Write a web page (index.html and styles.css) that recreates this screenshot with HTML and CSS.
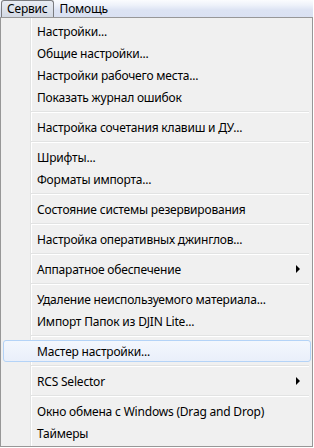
FILE: index.html
```html
<!DOCTYPE html>
<html lang="ru">
  <head>
    <meta charset="UTF-8" />
    <title>Сервис</title>
    <link rel="stylesheet" href="styles.css">
  </head>
  <body>
    <!-- Menu bar -->
    <div class="menubar">
      <span class="bar-item open">Сервис</span>
      <span class="bar-item">Помощь</span>
    </div>

    <!-- Dropdown -->
    <div class="menu">
      <div class="item">Настройки...</div>
      <div class="item">Общие настройки...</div>
      <div class="item">Настройки рабочего места...</div>
      <div class="item">Показать журнал ошибок</div>
      <div class="sep"></div>
      <div class="item">Настройка сочетания клавиш и ДУ...</div>
      <div class="sep"></div>
      <div class="item">Шрифты...</div>
      <div class="item">Форматы импорта...</div>
      <div class="sep"></div>
      <div class="item">Состояние системы резервирования</div>
      <div class="sep"></div>
      <div class="item">Настройка оперативных джинглов...</div>
      <div class="sep"></div>
      <div class="item sub">Аппаратное обеспечение</div>
      <div class="sep"></div>
      <div class="item">Удаление неиспользуемого материала...</div>
      <div class="item">Импорт Папок из DJIN Lite...</div>
      <div class="sep"></div>
      <div class="item hot">Мастер настройки...</div>
      <div class="sep"></div>
      <div class="item sub">RCS Selector</div>
      <div class="sep"></div>
      <div class="item">Окно обмена с Windows (Drag and Drop)</div>
      <div class="item">Таймеры</div>
    </div>
  </body>
</html>
```

FILE: styles.css
```css
body {
  margin: 0;
  width: 314px;
  height: 448px;
  background: #ffffff;
  font-family: "Noto Sans", "Open Sans", sans-serif;
  font-size: 12px;
  letter-spacing: -0.2px;
  color: #000;
  overflow: hidden;
}

/* Menu bar */
.menubar {
  height: 17px;
  width: 313px;
  display: flex;
  align-items: stretch;
  background: linear-gradient(#fbfcfe 0%, #eef2fa 30%, #dce3f3 60%, #dae1f2 100%);
}

.bar-item {
  display: flex;
  align-items: center;
  padding: 0 6px;
  line-height: 1;
}

.bar-item.open {
  margin-left: 1px;
  padding: 0 5px;
  border: 1px solid #7a7c80;
  border-bottom: none;
  border-radius: 3px 3px 0 0;
  background: linear-gradient(#e8ecf3, #d3d9e4);
}

/* Dropdown menu */
.menu {
  width: 311px;
  border: 1px solid #979797;
  background: linear-gradient(to right, #f0f0f0 29px, #e2e3e3 29px, #e2e3e3 30px, #ffffff 30px, #ffffff 31px, #f0f0f0 31px);
  padding: 2px 0;
  display: flex;
  flex-direction: column;
}

.item {
  height: 22px;
  display: flex;
  align-items: center;
  padding-left: 34px;
  position: relative;
  margin: 0 2px;
  white-space: nowrap;
}

.item.sub::after {
  content: "";
  position: absolute;
  right: 10px;
  top: 7px;
  border-left: 4px solid #000;
  border-top: 4px solid transparent;
  border-bottom: 4px solid transparent;
}

.item.hot {
  margin: 0 1px 0 2px;
  padding-left: 33px;
  border: 1px solid #b4d3f7;
  border-radius: 3px;
  height: 20px;
  background: linear-gradient(#f3f7fd, #e9effa);
}

.sep {
  height: 8px;
  margin-left: 30px;
  margin-right: 3px;
  display: flex;
  flex-direction: column;
  justify-content: center;
}

.sep::before {
  content: "";
  height: 1px;
  background: #e2e3e3;
  border-bottom: 1px solid #ffffff;
}
```
